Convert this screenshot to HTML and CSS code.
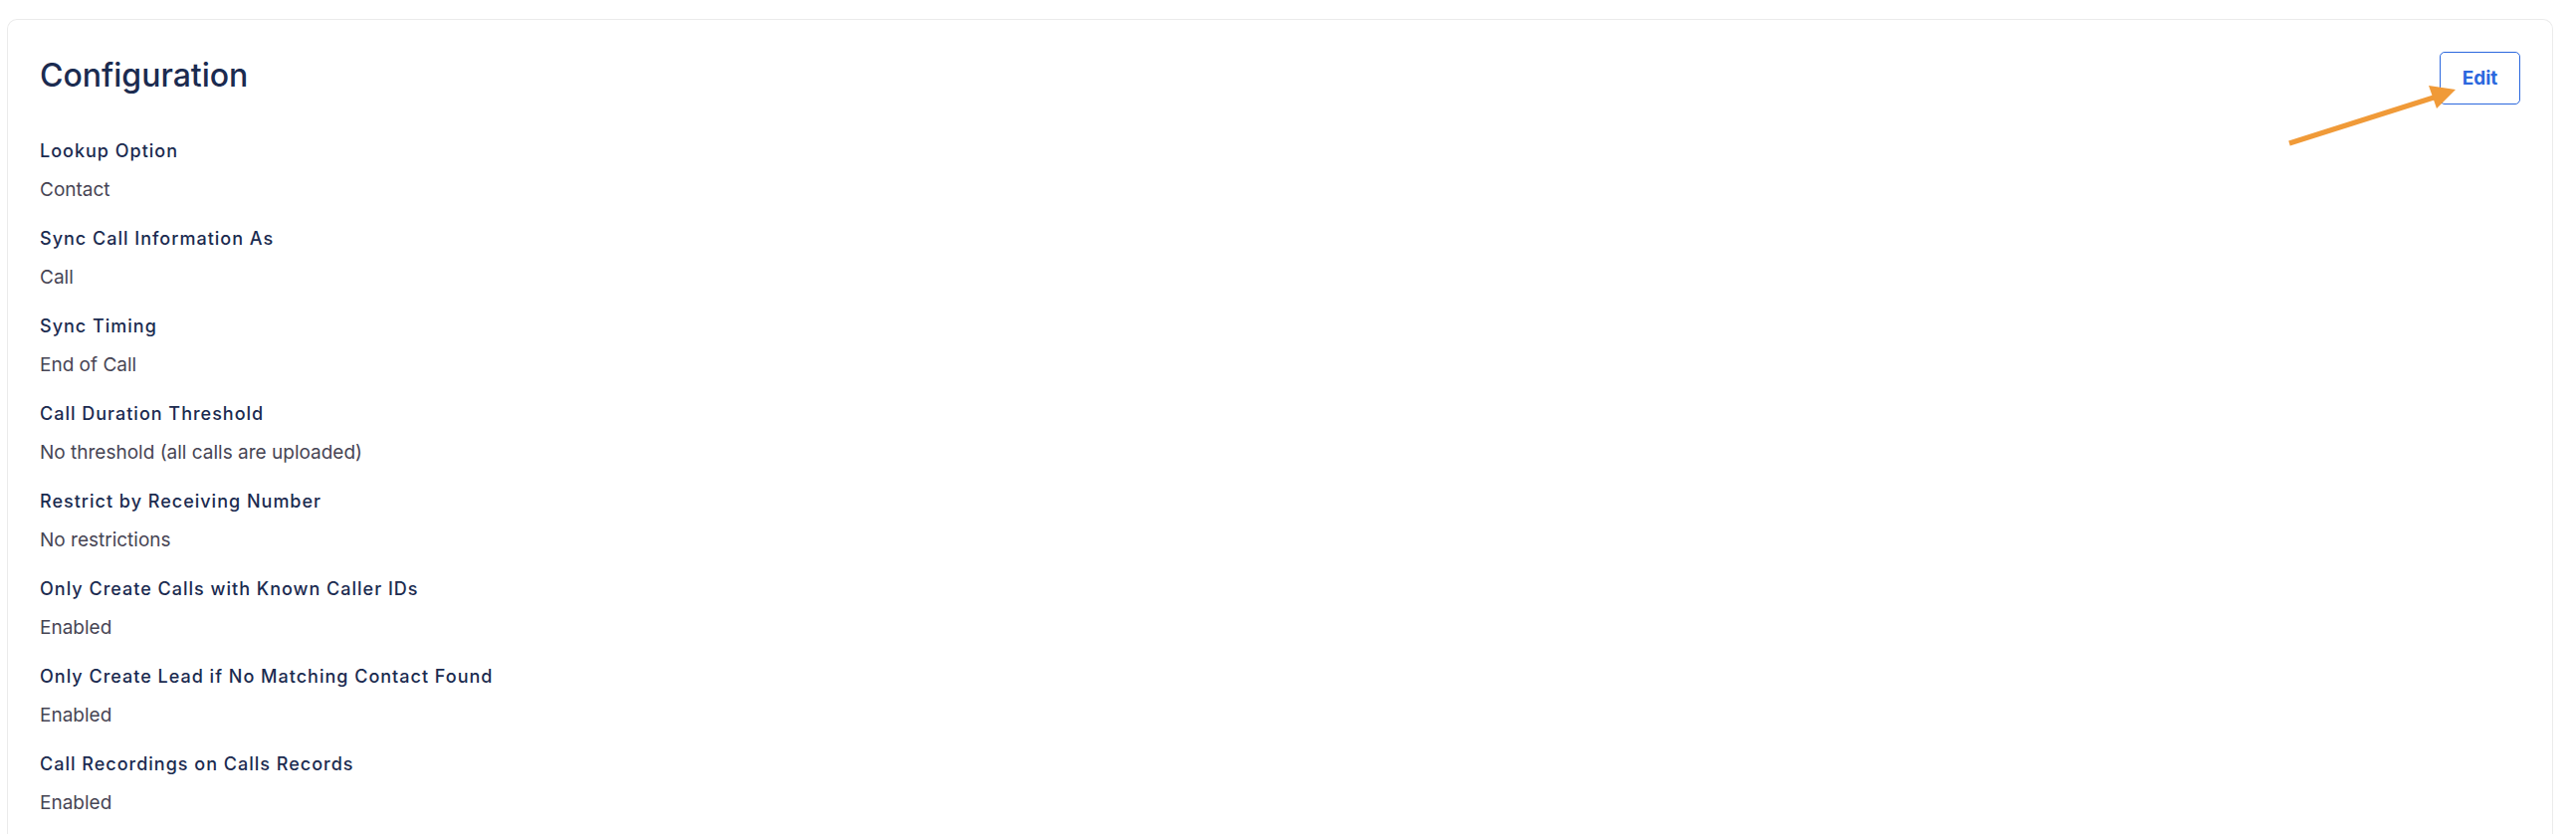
FILE: index.html
```
<!DOCTYPE html>
<html lang="en">
<head>
    <meta charset="UTF-8">
    <meta name="viewport" content="width=device-width, initial-scale=1.0">
    <title>Configuration</title>
    <link rel="stylesheet" href="styles.css">
</head>
<body>
    <section class="card">
        <div class="card-header">
            <h2 class="card-title">Configuration</h2>
            <div class="card-actions">
                <button type="button" class="edit-button">Edit</button>
                <svg class="arrow" viewBox="0 0 170 62" aria-hidden="true">
                    <path d="M1 59 L146 13" stroke="#f09a38" stroke-width="5" fill="none"/>
                    <path d="M141 1 L168 5 L149 24 Z" fill="#f09a38"/>
                </svg>
            </div>
        </div>

        <dl class="settings">
            <dt>Lookup Option</dt>
            <dd>Contact</dd>

            <dt>Sync Call Information As</dt>
            <dd>Call</dd>

            <dt>Sync Timing</dt>
            <dd>End of Call</dd>

            <dt>Call Duration Threshold</dt>
            <dd>No threshold (all calls are uploaded)</dd>

            <dt>Restrict by Receiving Number</dt>
            <dd>No restrictions</dd>

            <dt>Only Create Calls with Known Caller IDs</dt>
            <dd>Enabled</dd>

            <dt>Only Create Lead if No Matching Contact Found</dt>
            <dd>Enabled</dd>

            <dt>Call Recordings on Calls Records</dt>
            <dd>Enabled</dd>
        </dl>
    </section>
</body>
</html>
```

FILE: styles.css
```
* {
    box-sizing: border-box;
}
body {
    display: flex;
    flex-direction: column;
    min-height: 100vh;
    margin: 0;
    padding: 19px 23px 0 7px;
    font-family: Inter, "Liberation Sans", sans-serif;
    background-color: #fff;
}
.card {
    flex: 1;
    padding: 32px 32px 0;
    border: 1px solid #ebebeb;
    border-bottom: none;
    border-radius: 10px 10px 0 0;
}
.card-header {
    display: flex;
    justify-content: space-between;
    align-items: flex-start;
}
.card-title {
    margin: 4px 0 0;
    font-size: 32px;
    font-weight: 500;
    line-height: 40px;
    color: #1b2b50;
}
.card-actions {
    position: relative;
}
.edit-button {
    display: block;
    min-width: 81px;
    padding: 12px 20px;
    border: 1px solid #2b68de;
    border-radius: 5px;
    background-color: #fff;
    color: #2b68de;
    font-family: inherit;
    font-size: 19px;
    font-weight: 700;
    line-height: 27px;
    cursor: pointer;
}
.arrow {
    position: absolute;
    top: 33px;
    right: 63px;
    width: 170px;
    height: 62px;
    pointer-events: none;
}
.settings {
    margin: 33px 0 0;
    font-size: 19px;
    line-height: 28px;
}
.settings dt {
    font-size: 18px;
    font-weight: 500;
    letter-spacing: 1px;
    color: #1b2b50;
}
.settings dd {
    margin: 11px 0 21px;
    color: #474554;
}
.settings dd:last-child {
    margin-bottom: 0;
}
```
